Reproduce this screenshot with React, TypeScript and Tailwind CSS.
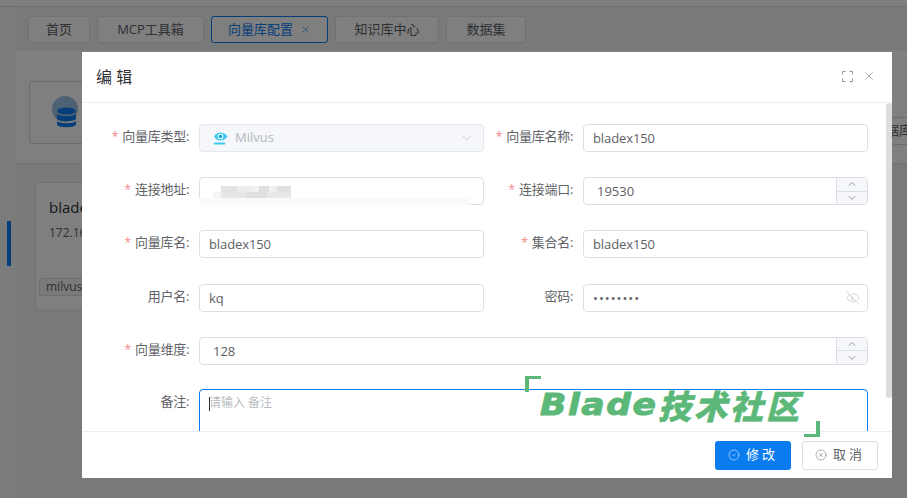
import React from "react";
import { ChevronDown, ChevronUp, CircleCheck, CircleX, EyeOff, X } from "lucide-react";

const cjk = "font-['Open_Sans','Noto_Sans_CJK_SC',sans-serif]";

function Label({ text, required, wide }: { text: string; required?: boolean; wide?: boolean }) {
  return (
    <label
      className={`${wide ? "w-[117px]" : "w-[99px]"} h-[28px] shrink-0 pr-[10px] text-right text-[13px] leading-[25px] tracking-[-0.3px] text-[#606266]`}
    >
      {required && <span className="mr-[4px] text-[#f78989]">*</span>}
      {text}:
    </label>
  );
}

function TextInput({ value, type = "text" }: { value: string; type?: string }) {
  return (
    <input
      readOnly
      type={type}
      value={value}
      className={`${type === "password" ? "tracking-[1px]" : "tracking-[-0.1px]"} h-[28px] w-[285px] rounded-[4px] border border-[#dcdfe6] bg-white px-[9px] text-[13px] text-[#606266] outline-none`}
    />
  );
}

function Stepper() {
  return (
    <div className="flex w-[31px] flex-col border-l border-[#dcdfe6] bg-[#f5f7fa] text-[#606266]">
      <span className="flex flex-1 items-center justify-center border-b border-[#dcdfe6]">
        <ChevronUp size={12} strokeWidth={1.2} />
      </span>
      <span className="flex flex-1 items-center justify-center">
        <ChevronDown size={12} strokeWidth={1.2} />
      </span>
    </div>
  );
}

function NumberInput({ value, wide }: { value: string; wide?: boolean }) {
  return (
    <div
      className={`${wide ? "w-[669px]" : "w-[285px]"} flex h-[28px] overflow-hidden rounded-[4px] border border-[#dcdfe6] bg-white`}
    >
      <span className="flex-1 pl-[13px] text-[13px] leading-[27px] text-[#606266]">{value}</span>
      <Stepper />
    </div>
  );
}

function MilvusIcon() {
  return (
    <svg width="16" height="16" viewBox="0 0 16 16" className="shrink-0">
      <path d="M1 6.5C3 3.5 5 2.5 7.5 2.5S12 3.5 14.5 6.5C12 9.5 10 10.5 7.5 10.5S3 9.500 1 6.500Z" fill="#3fc8f4" />
      <circle cx="7.5" cy="6.5" r="2.8" fill="#fff" />
      <circle cx="7.5" cy="6.5" r="1.8" fill="#0fa8dc" />
      <rect x="1" y="12.5" width="11" height="2" fill="#3fc8f4" />
    </svg>
  );
}

// the address was pixelated in the screenshot
function Mosaic() {
  const cells = [
    [8, 0, 16, 6, "#e3e3e5"], [24, 0, 14, 6, "#ececee"], [38, 0, 8, 6, "#f1f1f3"], [46, 0, 10, 6, "#dfdfe1"],
    [56, 0, 8, 6, "#f0f0f2"], [64, 0, 14, 6, "#e1e1e3"], [8, 6, 24, 6, "#e6e6e8"], [32, 6, 22, 6, "#e0e0e2"],
    [54, 6, 24, 6, "#e8e8ea"], [8, 12, 70, 3, "#eeeef0"], [0, 6, 8, 9, "#f6f6f8"],
  ] as const;
  return (
    <svg width="78" height="15" className="absolute left-[13px] top-[8px]">
      {cells.map((c, i) => (
        <rect key={i} x={c[0]} y={c[1]} width={c[2]} height={c[3]} fill={c[4]} />
      ))}
    </svg>
  );
}

function Watermark() {
  return (
    <div className="pointer-events-none absolute left-[525px] top-[376px] h-[61px] w-[295px]">
      <div className="absolute left-0 top-0 h-[16px] w-[16px] border-l-[4px] border-t-[3px] border-[#5cb878]" />
      <div className="absolute bottom-0 right-0 h-[16px] w-[16px] border-b-[3px] border-r-[4px] border-[#5cb878]" />
      <div className="absolute left-[15px] top-[11px] flex items-center whitespace-nowrap italic leading-[36px] text-[#5cb878]">
        <span className="inline-block w-[118px] origin-left scale-x-[1.15] font-['DejaVu_Sans',sans-serif] text-[30px] font-bold tracking-[1.4px] [-webkit-text-stroke:1px_#5cb878]">
          Blade
        </span>
        <span className="font-['Noto_Sans_CJK_SC',sans-serif] text-[33px] font-black tracking-[3px] [-webkit-text-stroke:0.5px_#5cb878]">
          技术社区
        </span>
      </div>
    </div>
  );
}

function Tab({ label, width, active }: { label: string; width: string; active?: boolean }) {
  return (
    <div
      className={`flex h-[27px] items-center justify-center rounded-[3px] border bg-white text-[13px] ${width} ${
        active ? "border-[#0a7cf0] text-[#0a7cf0]" : "border-[#dfe3e6] text-[#5c6066]"
      }`}
    >
      {label}
      {active && <X size={11} strokeWidth={1.5} className="ml-[7px]" />}
    </div>
  );
}

export default function App() {
  return (
    <div className={`relative h-[498px] w-[907px] overflow-hidden bg-[#f0f2f3] ${cjk}`}>
      <div className="h-[7px] border-b border-[#e0e0e0] bg-white" />
      <div className="flex h-[491px]">
        <aside className="flex w-[16px] shrink-0 flex-col bg-[#f5f6f7] pt-[214px]">
          <div className="ml-[7px] h-[45px] w-[4px] bg-[#0a7cf0]" />
        </aside>
        <main className="flex-1">
          <div className="flex h-[43px] items-start gap-[7px] border-b border-[#e6e8ea] pl-[12px] pt-[9px]">
            <Tab label="首页" width="w-[62px]" />
            <Tab label="MCP工具箱" width="w-[107px]" />
            <Tab label="向量库配置" width="w-[117px]" active />
            <Tab label="知识库中心" width="w-[104px]" />
            <Tab label="数据集" width="w-[80px]" />
          </div>
          <div className="flex h-[114px] items-end justify-between border-b border-[#e0e2e4] bg-white pb-[18px] pl-[13px]">
            <div className="mb-[1px] flex h-[63px] w-[80px] items-center rounded-[2px] border border-[#d8dadc] pl-[18px]">
              <svg width="36" height="36" viewBox="0 0 36 36" className="mt-[1px]">
                <circle cx="17" cy="14" r="13" fill="#9cc4ea" />
                <ellipse cx="18.500" cy="16" rx="9.500" ry="3.500" fill="#0a7cf0" />
                <path d="M9 19c3 3 16 3 19 0v5c-3 3-16 3-19 0z" fill="#0a7cf0" />
                <path d="M9 26c3 3 16 3 19 0v4c-3 3-16 3-19 0z" fill="#0a7cf0" />
              </svg>
            </div>
            <div className="flex h-[28px] w-[15px] items-center overflow-hidden whitespace-nowrap rounded-l-[3px] border-y border-[#d8dadc] text-[13px] text-[#5c6066]">
              <span className="-ml-[6px]">据库</span>
            </div>
          </div>
          <div className="ml-[19px] mt-[18px] h-[129px] w-[200px] rounded-[4px] border border-[#e4e6e8] bg-white pl-[13px] pt-[14px]">
            <div className="text-[15px] leading-[20px] text-[#303133]">bladex150</div>
            <div className="mt-[8px] text-[12px] leading-[16px] text-[#606266]">172.16.0.1</div>
            <div className="-ml-[10px] mt-[37px] w-fit rounded-[3px] border border-[#dcdfe6] bg-[#f4f4f5] px-[6px] text-[12px] leading-[16px] text-[#606266]">
              milvus
            </div>
          </div>
        </main>
      </div>

      <div className="absolute inset-0 bg-black/50" />

      <div className="absolute left-[82px] top-[52px] flex h-[426px] w-[810px] flex-col bg-white">
        <header className="flex h-[51px] shrink-0 items-center justify-between border-b border-[#ebeef5] pl-[14px] pr-[16px]">
          <span className="pb-[1px] text-[16px] text-[#303133]">编 辑</span>
          <div className="flex items-center gap-[9px] pb-[2px] text-[#909399]">
            <svg width="11" height="11" viewBox="0 0 11 11" fill="none" stroke="currentColor" strokeWidth="1">
              <path d="M.5 3.500v-3h3M7.500.5h3v3M10.500 7.500v3h-3M3.500 10.500h-3v-3" />
            </svg>
            <X size={14} strokeWidth={1.2} />
          </div>
        </header>

        <div className="relative flex-1 overflow-hidden pt-[21px]">
          <div className="flex flex-col gap-y-[25.2px]">
            <div className="flex">
              <div className="flex w-[402px]">
                <Label text="向量库类型" required wide />
                <div className="flex h-[28px] w-[285px] items-center rounded-[4px] border border-[#e4e7ed] bg-[#f5f7fa] pl-[13px] pr-[8px] text-[13px] text-[#b4b8c0]">
                  <MilvusIcon />
                  <span className="ml-[6px] flex-1">Milvus</span>
                  <ChevronDown size={16} strokeWidth={1} />
                </div>
              </div>
              <div className="flex">
                <Label text="向量库名称" required />
                <TextInput value="bladex150" />
              </div>
            </div>

            <div className="flex">
              <div className="flex w-[402px]">
                <Label text="连接地址" required wide />
                <div className="relative h-[28px] w-[285px] rounded-[4px] border border-[#dcdfe6] bg-white">
                  <Mosaic />
                  <div className="absolute -left-px bottom-[-1px] h-[7px] w-[271px] bg-[#f9fafc]" />
                </div>
              </div>
              <div className="flex">
                <Label text="连接端口" required />
                <NumberInput value="19530" />
              </div>
            </div>

            <div className="flex">
              <div className="flex w-[402px]">
                <Label text="向量库名" required wide />
                <TextInput value="bladex150" />
              </div>
              <div className="flex">
                <Label text="集合名" required />
                <TextInput value="bladex150" />
              </div>
            </div>

            <div className="flex">
              <div className="flex w-[402px]">
                <Label text="用户名" wide />
                <TextInput value="kq" />
              </div>
              <div className="flex">
                <Label text="密码" />
                <div className="relative">
                  <TextInput value="bladex15" type="password" />
                  <EyeOff size={14} strokeWidth={1} className="absolute right-[8px] top-[7px] text-[#b4b8bf]" />
                </div>
              </div>
            </div>

            <div className="flex">
              <Label text="向量维度" required wide />
              <NumberInput value="128" wide />
            </div>

            <div className="-mt-[1px] flex">
              <Label text="备注" wide />
              <div className="relative h-[64px] w-[669px] rounded-[4px] border border-[#0a7cf0] bg-white">
                <div className="absolute left-[9px] top-[7px] h-[14px] w-px bg-[#303133]" />
                <textarea
                  readOnly
                  placeholder="请输入 备注"
                  className="h-full w-full resize-none bg-transparent px-[9px] py-[4px] text-[12px] leading-[18px] outline-none placeholder:text-[#b8bbc2]"
                />
              </div>
            </div>
          </div>
          <div className="absolute right-0 top-0 h-[295px] w-[6px] rounded-[3px] bg-[#dddddd]" />
        </div>

        <footer className="flex h-[47px] shrink-0 items-center justify-end gap-[11px] border-t border-[#ebeef5] pr-[14px]">
          <button className="flex h-[29px] w-[76px] items-center justify-center gap-[6px] rounded-[3px] bg-[#0a7cf0] text-[13px] tracking-[3px] text-white">
            <CircleCheck size={12} strokeWidth={1} />
            修改
          </button>
          <button className="flex h-[29px] w-[76px] items-center justify-center gap-[6px] rounded-[3px] border border-[#dcdfe6] bg-white text-[13px] tracking-[3px] text-[#606266]">
            <CircleX size={12} strokeWidth={1} />
            取消
          </button>
        </footer>
      </div>

      <Watermark />
    </div>
  );
}
